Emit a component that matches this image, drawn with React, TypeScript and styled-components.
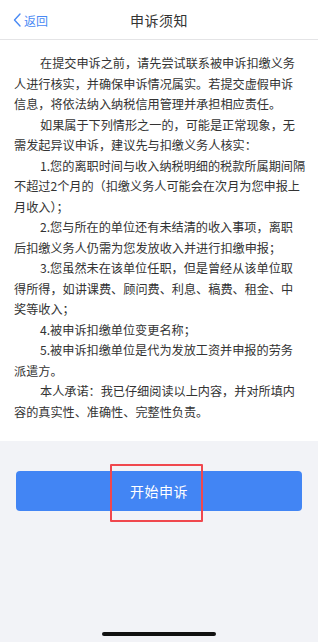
import React from 'react';
import styled, { createGlobalStyle } from 'styled-components';

const GlobalStyle = createGlobalStyle`
  html, body {
    margin: 0;
    padding: 0;
    background: #f2f3f7;
  }
  body {
    font-family: "Noto Sans CJK SC", "Noto Sans", sans-serif;
  }
`;

// 每段按原图的换行拆好
const paragraphs: string[][] = [
  [
    '在提交申诉之前，请先尝试联系被申诉扣缴义务',
    '人进行核实，并确保申诉情况属实。若提交虚假申诉',
    '信息，将依法纳入纳税信用管理并承担相应责任。',
  ],
  [
    '如果属于下列情形之一的，可能是正常现象，无',
    '需发起异议申诉，建议先与扣缴义务人核实：',
  ],
  [
    '1.您的离职时间与收入纳税明细的税款所属期间隔',
    '不超过2个月的（扣缴义务人可能会在次月为您申报上',
    '月收入）；',
  ],
  [
    '2.您与所在的单位还有未结清的收入事项，离职',
    '后扣缴义务人仍需为您发放收入并进行扣缴申报；',
  ],
  [
    '3.您虽然未在该单位任职，但是曾经从该单位取',
    '得所得，如讲课费、顾问费、利息、稿费、租金、中',
    '奖等收入；',
  ],
  ['4.被申诉扣缴单位变更名称；'],
  [
    '5.被申诉扣缴单位是代为发放工资并申报的劳务',
    '派遣方。',
  ],
  [
    '本人承诺：我已仔细阅读以上内容，并对所填内',
    '容的真实性、准确性、完整性负责。',
  ],
];

const App = () => {
  return (
    <>
      <GlobalStyle />
      <Page>
        <Header>
          <BackButton>
            <svg width="8" height="14" viewBox="0 0 8 14" fill="none">
              <path d="M7 1L1.5 7L7 13" stroke="#4a8af4" strokeWidth="1.4" strokeLinecap="round" strokeLinejoin="round" />
            </svg>
            <span>返回</span>
          </BackButton>
          <Title>申诉须知</Title>
        </Header>
        <Notice>
          {paragraphs.map((lines, i) => (
            <Paragraph key={i}>
              {lines.map((line, j) => (
                <Line key={j} $first={j === 0}>{line}</Line>
              ))}
            </Paragraph>
          ))}
        </Notice>
        <Footer>
          <ButtonWrap>
            <StartButton>开始申诉</StartButton>
            <Highlight />
          </ButtonWrap>
        </Footer>
        <HomeIndicator />
      </Page>
    </>
  );
};

export default App;

const Page = styled.div`
  width: 318px;
  height: 642px;
  display: flex;
  flex-direction: column;
  background: #f2f3f7;
  position: relative;
  overflow: hidden;
`;

const Header = styled.div`
  height: 39px;
  flex-shrink: 0;
  display: flex;
  align-items: center;
  justify-content: center;
  position: relative;
  background: #ffffff;
  border-bottom: 1px solid #e4e4e6;
`;

const BackButton = styled.div`
  position: absolute;
  left: 13px;
  top: 0;
  bottom: 0;
  display: flex;
  align-items: center;
  gap: 3px;
  color: #4a8af4;
  font-size: 12px;
  padding-top: 1px;
`;

const Title = styled.div`
  font-size: 14px;
  color: #333333;
  font-weight: 400;
  letter-spacing: 0.5px;
`;

const Notice = styled.div`
  background: #ffffff;
  padding: 13px 0 19px 14px;
  color: #333333;
  font-size: 12.15px;
  line-height: 20.5px;
`;

const Paragraph = styled.div``;

const Line = styled.div<{ $first: boolean }>`
  white-space: nowrap;
  padding-left: ${(p) => (p.$first ? '26px' : '0')};
`;

const Footer = styled.div`
  padding: 30px 16px 0;
`;

const ButtonWrap = styled.div`
  position: relative;
`;

const StartButton = styled.div`
  height: 40px;
  border-radius: 4px;
  background: #4285f4;
  color: #ffffff;
  font-size: 14px;
  display: flex;
  align-items: center;
  justify-content: center;
  letter-spacing: 0.5px;
`;

const Highlight = styled.div`
  position: absolute;
  left: 94px;
  top: -7px;
  width: 89px;
  height: 54px;
  border: 2px solid #f0474e;
  border-radius: 1px;
`;

const HomeIndicator = styled.div`
  position: absolute;
  left: 102px;
  bottom: 6px;
  width: 114px;
  height: 4px;
  border-radius: 2px;
  background: #111111;
`;
